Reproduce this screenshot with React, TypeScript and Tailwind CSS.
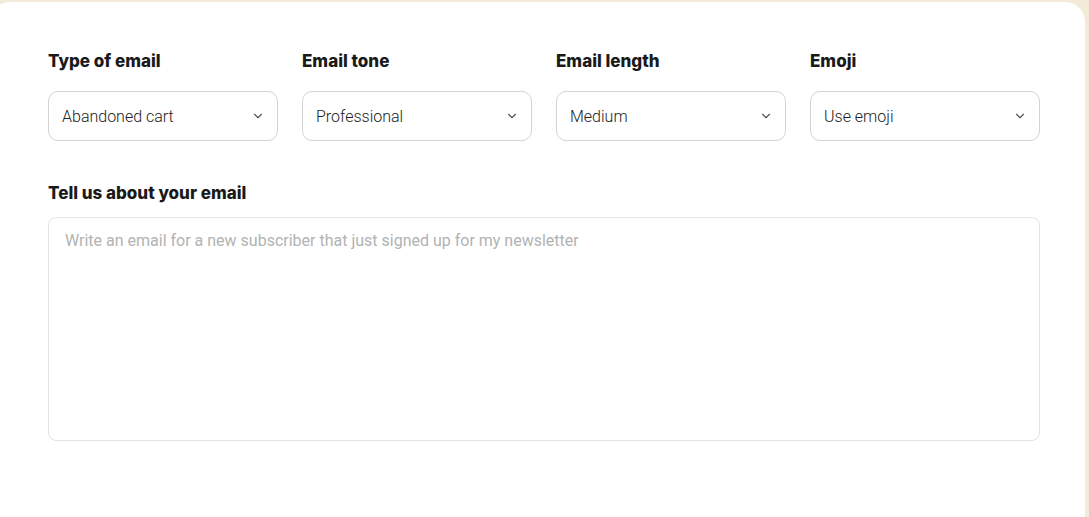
import { ChevronDown } from 'lucide-react'

const fields = [
  { label: 'Type of email', value: 'Abandoned cart' },
  { label: 'Email tone', value: 'Professional' },
  { label: 'Email length', value: 'Medium' },
  { label: 'Emoji', value: 'Use emoji' },
]

export default function App() {
  return (
    <div className="h-[517px] overflow-hidden bg-[#f4ead8] pt-[2px] pr-[4px]">
      <div className="h-[530px] -ml-[10px] rounded-[20px] bg-white pl-[58px] pr-[45px] pt-[49px]">
        {/* Selects */}
        <div className="grid grid-cols-4 gap-6">
          {fields.map((f) => (
            <div key={f.label}>
              <div className="font-['Inter',sans-serif] text-[17px] font-extrabold leading-5 text-[#1a1a1a]">
                {f.label}
              </div>
              <button className="mt-[20px] flex h-[50px] w-full items-center justify-between rounded-[10px] border border-[#d4d4d4] bg-white pl-[13px] pr-[12px] pt-px font-['Roboto',sans-serif] text-[16px] font-light text-[#222222]">
                <span>{f.value}</span>
                <ChevronDown className="-mt-px h-[14px] w-[14px] text-[#555]" strokeWidth={2} />
              </button>
            </div>
          ))}
        </div>

        {/* Description */}
        <div className="mt-[42px] font-['Inter',sans-serif] text-[17px] font-extrabold leading-5 text-[#1a1a1a]">
          Tell us about your email
        </div>
        <textarea
          className="mt-[14px] block h-[224px] w-full resize-none rounded-[8px] border border-[#e3e5e5] px-4 py-[11px] font-['Roboto',sans-serif] text-[16px] text-[#333] outline-none placeholder:text-[#b1b3b3]"
          placeholder="Write an email for a new subscriber that just signed up for my newsletter"
        />
      </div>
    </div>
  )
}
